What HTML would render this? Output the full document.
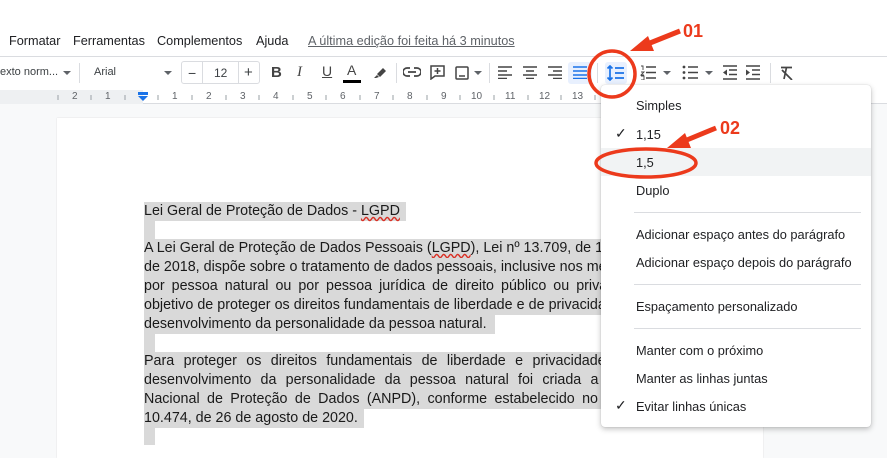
<!DOCTYPE html>
<html><head><meta charset="utf-8"><style>
*{margin:0;padding:0;box-sizing:border-box}
body{width:887px;height:445px;overflow:hidden;position:relative;background:#f8f9fa;font-family:"Liberation Sans",Arial,sans-serif;color:#202124}
.a{position:absolute;white-space:nowrap}
.top{position:absolute;left:0;top:0;width:887px;height:57px;background:#fff;border-bottom:1px solid #dadce0}
.tb{position:absolute;left:0;top:57px;width:887px;height:33px;background:#fff}
.ruler{position:absolute;left:0;top:90px;width:887px;height:14px;background:#fff;border-bottom:1px solid #dadce0;font-size:10px;color:#5f6368}
.page{position:absolute;left:57px;top:118px;width:706px;height:340px;background:#fff;box-shadow:0 0 1px #ccc}
.ln{position:absolute;left:144px;height:19px;line-height:19px;font-size:14.3px;color:#1a1a1a;white-space:nowrap;background:#d9d9d9}
.j{width:532px;text-align:justify;text-align-last:justify}
.menu{position:absolute;left:601px;top:85px;width:270px;height:342px;background:#fff;border-radius:4px;box-shadow:0 2px 6px rgba(0,0,0,.25),0 0 1px rgba(0,0,0,.2)}
.mi{position:absolute;left:35px;font-size:12.8px;color:#202124}
.dv{position:absolute;left:33px;right:10px;height:1px;background:#dadce0}
.sep{position:absolute;top:63px;width:1px;height:20px;background:#dadce0}
</style></head><body>
<div class="top">
<div class="a" style="left:9px;top:34px;font-size:12.7px">Formatar</div>
<div class="a" style="left:73px;top:34px;font-size:12.7px">Ferramentas</div>
<div class="a" style="left:157px;top:34px;font-size:12.7px">Complementos</div>
<div class="a" style="left:256px;top:34px;font-size:12.7px">Ajuda</div>
<div class="a" style="left:308px;top:34px;font-size:12.7px;color:#5f6368;text-decoration:underline">A última edição foi feita há 3 minutos</div>
</div>
<div class="tb"></div>
<div class="a" style="left:0;top:66px;font-size:11px;color:#3c4043">exto norm...</div>
<svg class="a" style="left:63px;top:71px" width="8" height="5"><path d="M0 0h8L4 4z" fill="#5f6368"/></svg>
<div class="sep" style="left:79px"></div>
<div class="a" style="left:94px;top:66px;font-size:11px;color:#3c4043">Arial</div>
<svg class="a" style="left:164px;top:71px" width="8" height="5"><path d="M0 0h8L4 4z" fill="#5f6368"/></svg>
<div class="a" style="left:181px;top:61px;width:79px;height:23px;border:1px solid #dadce0;border-radius:3px"></div>
<div class="a" style="left:202px;top:62px;width:1px;height:21px;background:#dadce0"></div>
<div class="a" style="left:238px;top:62px;width:1px;height:21px;background:#dadce0"></div>
<div class="a" style="left:188px;top:65px;font-size:14px;color:#3c4043">−</div>
<div class="a" style="left:214px;top:66px;font-size:12px;color:#3c4043">12</div>
<div class="a" style="left:244px;top:64px;font-size:15px;color:#3c4043">+</div>
<div class="a" style="left:271px;top:64px;font-size:15px;font-weight:bold;color:#444">B</div>
<div class="a" style="left:297px;top:64px;font-size:15px;font-style:italic;font-family:'Liberation Serif',serif;color:#444">I</div>
<div class="a" style="left:322px;top:63px;font-size:14px;text-decoration:underline;color:#444">U</div>
<div class="a" style="left:347px;top:62px;font-size:14px;color:#444">A</div>
<div class="a" style="left:343px;top:80px;width:18px;height:3px;background:#000"></div>
<svg class="a" style="left:372px;top:65px" width="15" height="14"><path d="M2 13l3-3 2 2-3 1zM5 9l6-6 3 3-6 6z" fill="#444"/></svg>
<div class="sep" style="left:396px"></div>
<svg class="a" style="left:403px;top:67px" width="18" height="10"><path d="M7 1H4a4 4 0 000 8h3M11 1h3a4 4 0 010 8h-3M5 5h8" stroke="#444" stroke-width="1.7" fill="none"/></svg>
<svg class="a" style="left:430px;top:65px" width="15" height="15"><path d="M1 1h13v10H5l-4 3z" stroke="#444" stroke-width="1.5" fill="none"/><path d="M7.5 3v6M4.5 6h6" stroke="#444" stroke-width="1.5"/></svg>
<svg class="a" style="left:455px;top:66px" width="14" height="14"><rect x="1" y="1" width="12" height="12" rx="1" stroke="#444" stroke-width="1.5" fill="none"/><path d="M4 10h6" stroke="#444" stroke-width="1.5"/></svg>
<svg class="a" style="left:474px;top:71px" width="8" height="5"><path d="M0 0h8L4 4z" fill="#5f6368"/></svg>
<div class="sep" style="left:489px"></div>
<svg class="a" style="left:498px;top:66px" width="14" height="13"><path d="M0 1h14M0 5h9M0 9h14M0 12.5h9" stroke="#444" stroke-width="1.6"/></svg>
<svg class="a" style="left:523px;top:66px" width="14" height="13"><path d="M0 1h14M3 5h8M0 9h14M3 12.5h8" stroke="#444" stroke-width="1.6"/></svg>
<svg class="a" style="left:548px;top:66px" width="14" height="13"><path d="M0 1h14M5 5h9M0 9h14M5 12.5h9" stroke="#444" stroke-width="1.6"/></svg>
<div class="a" style="left:568px;top:62px;width:24px;height:22px;background:#e8f0fe;border-radius:3px"></div>
<svg class="a" style="left:573px;top:66px" width="14" height="13"><path d="M0 1h14M0 5h14M0 9h14M0 12.5h14" stroke="#1a73e8" stroke-width="1.6"/></svg>
<div class="sep" style="left:597px"></div>
<div class="a" style="left:605px;top:62px;width:22px;height:22px;background:#e8f0fe;border-radius:3px"></div>
<svg class="a" style="left:607px;top:65px" width="18" height="16"><path d="M3 1v14M0.5 3.5L3 1l2.5 2.5M0.5 12.5L3 15l2.5-2.5M8 3h9M8 8h9M8 13h9" stroke="#1a73e8" stroke-width="1.7" fill="none"/></svg>
<svg class="a" style="left:640px;top:65px" width="16" height="15"><path d="M6 2h10M6 7.5h10M6 13h10" stroke="#444" stroke-width="1.6"/><path d="M1 1h2v4M1 7h3l-3 3h3M1 11h3v4H1" stroke="#444" stroke-width="0.9" fill="none"/></svg>
<svg class="a" style="left:663px;top:71px" width="8" height="5"><path d="M0 0h8L4 4z" fill="#5f6368"/></svg>
<svg class="a" style="left:682px;top:65px" width="16" height="15"><circle cx="2" cy="2" r="1.4" fill="#444"/><circle cx="2" cy="7.5" r="1.4" fill="#444"/><circle cx="2" cy="13" r="1.4" fill="#444"/><path d="M6 2h10M6 7.5h10M6 13h10" stroke="#444" stroke-width="1.6"/></svg>
<svg class="a" style="left:705px;top:71px" width="8" height="5"><path d="M0 0h8L4 4z" fill="#5f6368"/></svg>
<svg class="a" style="left:723px;top:65px" width="14" height="15"><path d="M0 1h14M6 5h8M6 9.5h8M0 14h14" stroke="#444" stroke-width="1.6"/><path d="M4 4.5L0 7.5l4 3z" fill="#444"/></svg>
<svg class="a" style="left:746px;top:65px" width="14" height="15"><path d="M0 1h14M6 5h8M6 9.5h8M0 14h14" stroke="#444" stroke-width="1.6"/><path d="M0 4.5L4 7.5l-4 3z" fill="#444"/></svg>
<div class="sep" style="left:770px"></div>
<svg class="a" style="left:780px;top:66px" width="14" height="14"><path d="M1 1.5h11M6.5 1.5L4 13M2 4l10 10" stroke="#444" stroke-width="1.7" fill="none"/></svg>
<div class="ruler">
<div class="a" style="left:0;top:0;width:143px;height:14px;background:#eef0f2"></div>
<div class="a" style="left:72px;top:1px">2</div><div class="a" style="left:105px;top:1px">1</div>
<div class="a" style="left:172px;top:1px">1</div><div class="a" style="left:206px;top:1px">2</div><div class="a" style="left:240px;top:1px">3</div><div class="a" style="left:273px;top:1px">4</div><div class="a" style="left:307px;top:1px">5</div><div class="a" style="left:340px;top:1px">6</div><div class="a" style="left:374px;top:1px">7</div><div class="a" style="left:407px;top:1px">8</div><div class="a" style="left:441px;top:1px">9</div><div class="a" style="left:471px;top:1px">10</div><div class="a" style="left:505px;top:1px">11</div><div class="a" style="left:539px;top:1px">12</div><div class="a" style="left:572px;top:1px">13</div>
<svg class="a" style="left:0;top:0" width="600" height="14"><path d="M58 5v5M91 5v5M125 5v5M158 5v5M192 5v5M226 5v5M259 5v5M293 5v5M326 5v5M360 5v5M393 5v5M427 5v5M460 5v5M494 5v5M528 5v5M561 5v5M595 5v5" stroke="#9aa0a6" stroke-width="1"/></svg>
<svg class="a" style="left:137px;top:2px" width="12" height="9"><rect x="1" y="0" width="10" height="3" fill="#1a73e8"/><path d="M1 4h10L6 9z" fill="#1a73e8"/></svg>
</div>
<div class="page"></div>
<div class="ln" style="top:202px;width:262px">Lei Geral de Proteção de Dados - <span style="text-decoration:underline wavy #d93025">LGPD</span></div>
<div class="ln" style="top:221px;width:11px;height:18px"></div>
<div class="ln j" style="top:239px">A Lei Geral de Proteção de Dados Pessoais (<span style="text-decoration:underline wavy #d93025">LGPD</span>), Lei nº 13.709, de 14 de agosto</div>
<div class="ln j" style="top:258px">de 2018, dispõe sobre o tratamento de dados pessoais, inclusive nos meios digitais,</div>
<div class="ln j" style="top:277px">por pessoa natural ou por pessoa jurídica de direito público ou privado, com o</div>
<div class="ln j" style="top:296px">objetivo de proteger os direitos fundamentais de liberdade e de privacidade e o livre</div>
<div class="ln" style="top:315px;width:351px">desenvolvimento da personalidade da pessoa natural.</div>
<div class="ln" style="top:334px;width:11px;height:18px"></div>
<div class="ln j" style="top:352px">Para proteger os direitos fundamentais de liberdade e privacidade e o livre</div>
<div class="ln j" style="top:371px">desenvolvimento da personalidade da pessoa natural foi criada a Autoridade</div>
<div class="ln j" style="top:390px">Nacional de Proteção de Dados (ANPD), conforme estabelecido no Decreto nº</div>
<div class="ln" style="top:409px;width:220px">10.474, de 26 de agosto de 2020.</div>
<div class="ln" style="top:428px;width:11px;height:17px"></div>
<div class="menu">
<div class="mi" style="top:13px">Simples</div>
<div class="a" style="left:14px;top:40px;font-size:14px">✓</div>
<div class="mi" style="top:42px">1,15</div>
<div class="a" style="left:0;top:63px;width:270px;height:28px;background:#f1f3f4"></div>
<div class="mi" style="top:70px">1,5</div>
<div class="mi" style="top:98px">Duplo</div>
<div class="dv" style="top:127px"></div>
<div class="mi" style="top:142px">Adicionar espaço antes do parágrafo</div>
<div class="mi" style="top:170px">Adicionar espaço depois do parágrafo</div>
<div class="dv" style="top:199px"></div>
<div class="mi" style="top:214px">Espaçamento personalizado</div>
<div class="dv" style="top:243px"></div>
<div class="mi" style="top:258px">Manter com o próximo</div>
<div class="mi" style="top:286px">Manter as linhas juntas</div>
<div class="a" style="left:14px;top:312px;font-size:14px">✓</div>
<div class="mi" style="top:314px">Evitar linhas únicas</div>
</div>
<svg class="a" style="left:0;top:0" width="887" height="445">
<circle cx="612" cy="74" r="23" stroke="#ec3a1c" stroke-width="3.5" fill="none"/>
<path d="M680 31L645 45" stroke="#ec3a1c" stroke-width="5"/><path d="M630 51L648 36l6 15z" fill="#ec3a1c"/>
<text x="683" y="37" font-family="Liberation Sans" font-weight="bold" font-size="18" fill="#ec3a1c">01</text>
<ellipse cx="646" cy="163" rx="50" ry="14" stroke="#ec3a1c" stroke-width="3.5" fill="none"/>
<path d="M716 128L682 142" stroke="#ec3a1c" stroke-width="5"/><path d="M667 148L685 133l6 15z" fill="#ec3a1c"/>
<text x="720" y="134" font-family="Liberation Sans" font-weight="bold" font-size="18" fill="#ec3a1c">02</text>
</svg>
</body></html>
